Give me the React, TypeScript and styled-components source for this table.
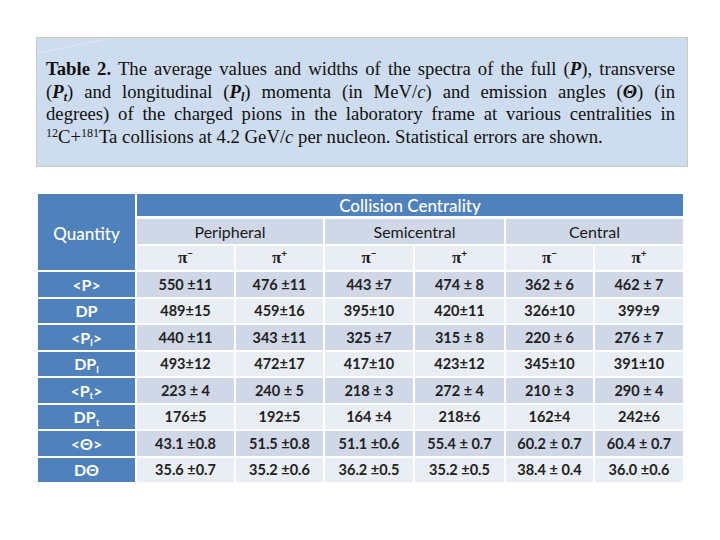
import React from "react";
import styled, { createGlobalStyle } from "styled-components";

const Global = createGlobalStyle`
  html, body { margin: 0; padding: 0; background: #ffffff; }
  body { width: 720px; height: 540px; overflow: hidden; }
`;

const Page = styled.div`
  display: flex;
  flex-direction: column;
  padding: 37px 0 0 36px;
`;

const Caption = styled.div`
  position: relative;
  box-sizing: border-box;
  width: 652px;
  height: 130px;
  background: #cddcee;
  border: 1px solid #c4ccb8;
  padding: 20px 12px 0 9px;
  font-family: "Liberation Serif", "Times New Roman", serif;
  font-size: 18.7px;
  line-height: 22.7px;
  color: #111;
`;

const Line = styled.div<{ $last?: boolean }>`
  text-align: ${(p) => (p.$last ? "left" : "justify")};
  text-align-last: ${(p) => (p.$last ? "left" : "justify")};
  white-space: normal;
`;

const Deco = styled.svg`
  position: absolute;
  left: 0;
  top: 0;
`;

const Sup = styled.sup`
  font-size: 12px;
  line-height: 0;
  vertical-align: 6px;
`;

const Sub = styled.sub`
  font-size: 12px;
  line-height: 0;
  vertical-align: -3px;
`;

const Table = styled.div`
  margin: 27px 0 0 2px;
  display: grid;
  grid-template-columns: 97px 97px 87px 88px 89px 87px 88px;
  grid-template-rows: 23px 25px 24px repeat(8, 24.5px);
  column-gap: 2px;
  row-gap: 2px;
  font-family: Lato, "Open Sans", sans-serif;
  & > :nth-child(2) { margin-bottom: 1px; }
`;

const Cell = styled.div<{ $bg: string; $span?: number; $rows?: number; $color?: string; $weight?: number; $size?: number }>`
  background: ${(p) => p.$bg};
  color: ${(p) => p.$color || "#1a1a1a"};
  grid-column: span ${(p) => p.$span || 1};
  grid-row: span ${(p) => p.$rows || 1};
  display: flex;
  align-items: center;
  justify-content: center;
  font-size: ${(p) => p.$size || 14}px;
  font-weight: ${(p) => p.$weight || 400};
  white-space: nowrap;
`;

const LSub = styled.span`
  font-size: 10px;
  position: relative;
  top: 5px;
`;

const Pi = styled.span`
  font-family: "Liberation Serif", "Times New Roman", serif;
  font-size: 17px;
  font-weight: 700;
`;

const PiSign = styled.span`
  font-size: 10px;
  font-weight: 700;
  position: relative;
  top: -5px;
`;

const BLUE = "#4f81bd";
const DARK = "#d0d8e8";
const LIGHT = "#e9edf4";

const rows: { label: React.ReactNode; vals: string[] }[] = [
  { label: "<P>", vals: ["550 ±11", "476 ±11", "443 ±7", "474 ± 8", "362 ± 6", "462 ± 7"] },
  { label: "DP", vals: ["489±15", "459±16", "395±10", "420±11", "326±10", "399±9"] },
  { label: <>&lt;P<LSub>l</LSub>&gt;</>, vals: ["440 ±11", "343 ±11", "325 ±7", "315 ± 8", "220 ± 6", "276 ± 7"] },
  { label: <>DP<LSub>l</LSub></>, vals: ["493±12", "472±17", "417±10", "423±12", "345±10", "391±10"] },
  { label: <>&lt;P<LSub>t</LSub>&gt;</>, vals: ["223 ± 4", "240 ± 5", "218 ± 3", "272 ± 4", "210 ± 3", "290 ± 4"] },
  { label: <>DP<LSub>t</LSub></>, vals: ["176±5", "192±5", "164 ±4", "218±6", "162±4", "242±6"] },
  { label: "<Θ>", vals: ["43.1 ±0.8", "51.5 ±0.8", "51.1 ±0.6", "55.4 ± 0.7", "60.2 ± 0.7", "60.4 ± 0.7"] },
  { label: "DΘ", vals: ["35.6 ±0.7", "35.2 ±0.6", "36.2 ±0.5", "35.2 ±0.5", "38.4 ± 0.4", "36.0 ±0.6"] },
];

const pions = ["−", "+", "−", "+", "−", "+"];

export default function App() {
  return (
    <>
      <Global />
      <Page>
        <Caption>
          <Deco width="80" height="20" viewBox="0 0 80 20">
            <path d="M1 15 Q 35 8 70 1" stroke="#ffffff" strokeWidth="1" strokeDasharray="1.5 2" fill="none" opacity="0.8" />
          </Deco>
          <Line>
            <b>Table 2.</b> The average values and widths of the spectra of the full (<b><i>P</i></b>), transverse
          </Line>
          <Line>
            (<b><i>P</i></b><Sub><b><i>t</i></b></Sub>) and longitudinal (<b><i>P</i></b><Sub><b><i>l</i></b></Sub>) momenta (in MeV/<i>c</i>) and emission angles (<b><i>Θ</i></b>) (in
          </Line>
          <Line>degrees) of the charged pions in the laboratory frame at various centralities in</Line>
          <Line $last>
            <Sup>12</Sup>C+<Sup>181</Sup>Ta collisions at 4.2 GeV/<i>c</i> per nucleon. Statistical errors are shown.
          </Line>
        </Caption>
        <Table>
          <Cell $bg={BLUE} $rows={3} $color="#ffffff" $size={17} $weight={500} style={{ paddingTop: 2 }}>Quantity</Cell>
          <Cell $bg={BLUE} $span={6} $color="#ffffff" $size={17} $weight={500}>Collision Centrality</Cell>
          <Cell $bg={DARK} $span={2} $size={16}>Peripheral</Cell>
          <Cell $bg={DARK} $span={2} $size={16}>Semicentral</Cell>
          <Cell $bg={DARK} $span={2} $size={16}>Central</Cell>
          {pions.map((s, i) => (
            <Cell key={i} $bg={LIGHT}>
              <Pi>π</Pi>
              <PiSign>{s}</PiSign>
            </Cell>
          ))}
          {rows.map((r, i) => (
            <React.Fragment key={i}>
              <Cell $bg={BLUE} $color="#ffffff" $weight={700} $size={16}>{r.label}</Cell>
              {r.vals.map((v, j) => (
                <Cell key={j} $bg={i % 2 === 0 ? DARK : LIGHT} $weight={700} $size={14.5} $color="#222">{v}</Cell>
              ))}
            </React.Fragment>
          ))}
        </Table>
      </Page>
    </>
  );
}
